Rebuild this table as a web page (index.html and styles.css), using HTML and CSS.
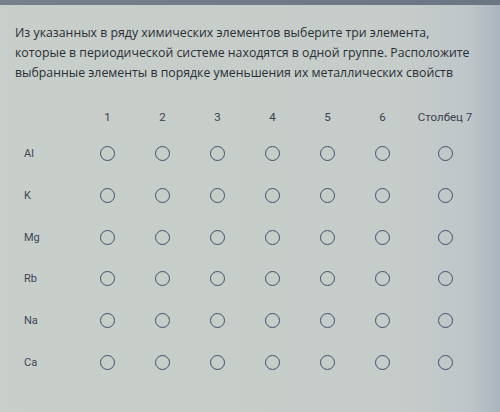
FILE: index.html
```html
<!DOCTYPE html>
<html lang="ru">
<head>
<meta charset="utf-8">
<link rel="stylesheet" href="styles.css">
</head>
<body>
<div class="topbar"></div>
<div class="card">
  <p class="question">Из указанных в ряду химических элементов выберите три элемента,<br>которые в периодической системе находятся в одной группе. Расположите<br>выбранные элементы в порядке уменьшения их металлических свойств</p>
  <div class="grid">
    <div class="head"></div>
    <div class="head">1</div>
    <div class="head">2</div>
    <div class="head">3</div>
    <div class="head">4</div>
    <div class="head">5</div>
    <div class="head">6</div>
    <div class="head">Столбец 7</div>

    <div class="label">Al</div>
    <div class="cell"><span class="radio"></span></div><div class="cell"><span class="radio"></span></div><div class="cell"><span class="radio"></span></div><div class="cell"><span class="radio"></span></div><div class="cell"><span class="radio"></span></div><div class="cell"><span class="radio"></span></div><div class="cell"><span class="radio"></span></div>

    <div class="label">K</div>
    <div class="cell"><span class="radio"></span></div><div class="cell"><span class="radio"></span></div><div class="cell"><span class="radio"></span></div><div class="cell"><span class="radio"></span></div><div class="cell"><span class="radio"></span></div><div class="cell"><span class="radio"></span></div><div class="cell"><span class="radio"></span></div>

    <div class="label">Mg</div>
    <div class="cell"><span class="radio"></span></div><div class="cell"><span class="radio"></span></div><div class="cell"><span class="radio"></span></div><div class="cell"><span class="radio"></span></div><div class="cell"><span class="radio"></span></div><div class="cell"><span class="radio"></span></div><div class="cell"><span class="radio"></span></div>

    <div class="label">Rb</div>
    <div class="cell"><span class="radio"></span></div><div class="cell"><span class="radio"></span></div><div class="cell"><span class="radio"></span></div><div class="cell"><span class="radio"></span></div><div class="cell"><span class="radio"></span></div><div class="cell"><span class="radio"></span></div><div class="cell"><span class="radio"></span></div>

    <div class="label">Na</div>
    <div class="cell"><span class="radio"></span></div><div class="cell"><span class="radio"></span></div><div class="cell"><span class="radio"></span></div><div class="cell"><span class="radio"></span></div><div class="cell"><span class="radio"></span></div><div class="cell"><span class="radio"></span></div><div class="cell"><span class="radio"></span></div>

    <div class="label">Ca</div>
    <div class="cell"><span class="radio"></span></div><div class="cell"><span class="radio"></span></div><div class="cell"><span class="radio"></span></div><div class="cell"><span class="radio"></span></div><div class="cell"><span class="radio"></span></div><div class="cell"><span class="radio"></span></div><div class="cell"><span class="radio"></span></div>
  </div>
</div>
</body>
</html>
```
FILE: styles.css
```css
html, body {
  margin: 0;
  padding: 0;
}
body {
  width: 500px;
  height: 412px;
  overflow: hidden;
  background: linear-gradient(90deg, #c8cec9 0%, #c6ccc9 80%, #bfc6c9 94%, #aab4bd 100%);
  font-family: Roboto, "Noto Sans", sans-serif;
}
.topbar {
  height: 5px;
  background: linear-gradient(90deg, #75808a, #6a7684);
}
.card {
  padding: 18px 0 0 15px;
}
.question {
  margin: 0;
  font-family: "Open Sans", "Noto Sans", sans-serif;
  font-size: 12.3px;
  line-height: 20px;
  color: #2a2f37;
  white-space: nowrap;
}
.grid {
  margin-top: 18px;
  display: grid;
  grid-template-columns: 65px repeat(6, 55px) 70px;
  grid-template-rows: 32px repeat(6, 41.7px);
}
.head {
  display: flex;
  align-items: center;
  justify-content: center;
  font-size: 11.5px;
  color: #3a4150;
}
.label {
  display: flex;
  align-items: center;
  padding-left: 9px;
  font-size: 11px;
  color: #3d4658;
}
.cell {
  display: flex;
  align-items: center;
  justify-content: center;
}
.radio {
  box-sizing: border-box;
  width: 15px;
  height: 15px;
  border-radius: 50%;
  border: 1.8px solid #434f6c;
}
```
